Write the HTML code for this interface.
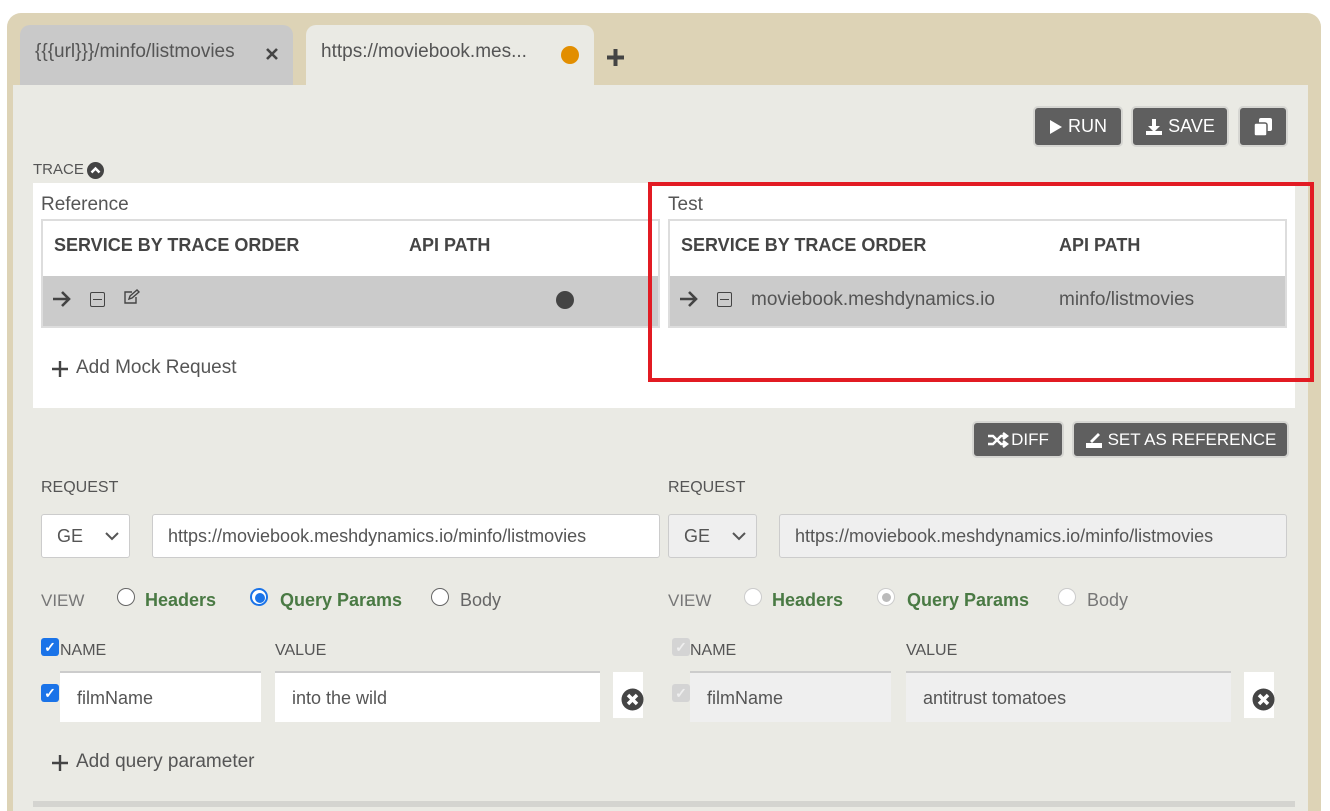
<!DOCTYPE html>
<html><head><style>
*{box-sizing:border-box;margin:0;padding:0}
html,body{width:1330px;height:811px;overflow:hidden}
body{background:#fff;font-family:"Liberation Sans",sans-serif;color:#555;position:relative}
.a{position:absolute}
.btn{position:absolute;background:#5f5f5f;border:2px solid #d6d6d2;border-radius:5px;color:#fff;font-size:18px;display:flex;align-items:center;justify-content:center;gap:5px}
.th{font-weight:bold;font-size:18px;color:#444}
.lbl{font-size:16px;color:#555}
.inp{position:absolute;background:#fff;border:1px solid #ccc;border-radius:3px;font-size:18px;color:#555;padding-left:15px;display:flex;align-items:center}
.radio{position:absolute;width:18px;height:18px;border-radius:50%;border:1px solid #666;background:#fff}
.g{color:#4a7a44;font-weight:bold;font-size:18px}
.cb{position:absolute;width:18px;height:18px;border-radius:3px;background:#1a73e8;color:#fff;font-size:14px;line-height:18px;text-align:center;font-weight:bold}
.cbd{background:#d4d4d4;color:#eee}
</style></head><body>
<div class="a" style="left:7px;top:13px;width:1314px;height:820px;background:#ddd3b6;border-radius:14px"></div>
<div class="a" style="left:13px;top:85px;width:1295px;height:740px;background:#eaeae4"></div>
<div class="a" style="left:20px;top:25px;width:273px;height:60px;background:#c9c9c9;border-radius:10px 10px 0 0"></div>
<div class="a" style="left:35px;top:41px;font-size:19px;color:#555">{{{url}}}/minfo/listmovies</div>
<svg class="a" style="left:266px;top:48px" width="12" height="12"><path d="M1 1L11 11M11 1L1 11" stroke="#444" stroke-width="2.6"/></svg>
<div class="a" style="left:306px;top:25px;width:288px;height:62px;background:#eaeae4;border-radius:10px 10px 0 0"></div>
<div class="a" style="left:321px;top:41px;font-size:19px;color:#555">https://moviebook.mes...</div>
<div class="a" style="left:561px;top:46px;width:18px;height:18px;border-radius:50%;background:#e28e00"></div>
<svg class="a" style="left:606px;top:48px" width="19" height="19"><path d="M9.5 1v17M1 9.5h17" stroke="#444" stroke-width="4"/></svg>

<div class="btn" style="left:1033px;top:106px;width:90px;height:41px"><svg width="14" height="16"><path d="M1 1L13 8L1 15Z" fill="#fff"/></svg>RUN</div>
<div class="btn" style="left:1131px;top:106px;width:98px;height:41px"><svg width="18" height="18"><path d="M7 1h4v7h4l-6 6-6-6h4z M1 13h16v4H1z" fill="#fff"/></svg>SAVE</div>
<div class="btn" style="left:1238px;top:106px;width:50px;height:41px"><svg width="20" height="20"><rect x="6" y="1" width="13" height="13" rx="2" fill="#fff"/><rect x="1" y="6" width="13" height="13" rx="2" fill="#fff" stroke="#5f5f5f" stroke-width="1.5"/></svg></div>

<div class="a" style="left:33px;top:161px;font-size:15px;color:#555">TRACE</div>
<div class="a" style="left:87px;top:162px;width:17px;height:17px;border-radius:50%;background:#444"><svg width="17" height="17"><path d="M4.5 10.5L8.5 6.5L12.5 10.5" stroke="#fff" stroke-width="2.5" fill="none"/></svg></div>

<div class="a" style="left:33px;top:183px;width:1262px;height:225px;background:#fff"></div>
<div class="a" style="left:41px;top:194px;font-size:19px;color:#555">Reference</div>
<div class="a" style="left:668px;top:194px;font-size:19px;color:#555">Test</div>
<div class="a" style="left:41px;top:219px;width:619px;height:109px;border:2px solid #ddd;background:#fff"></div>
<div class="a" style="left:43px;top:276px;width:615px;height:50px;background:#cbcbcb"></div>
<div class="a th" style="left:54px;top:235px">SERVICE BY TRACE ORDER</div>
<div class="a th" style="left:409px;top:235px">API PATH</div>
<svg class="a" style="left:52px;top:290px" width="20" height="18"><path d="M1 9h16M10 2l7 7-7 7" stroke="#444" stroke-width="2.6" fill="none"/></svg>
<div class="a" style="left:90px;top:292px;width:15px;height:15px;border:1.5px solid #444;border-radius:2px"><div style="margin:5.5px 2px;height:1.5px;background:#444"></div></div>
<svg class="a" style="left:123px;top:289px" width="18" height="16"><path d="M9 3H2v11h11V8 M6 10l1-3 7-6 2 2-7 6z" stroke="#444" stroke-width="1.4" fill="none"/></svg>
<div class="a" style="left:556px;top:291px;width:18px;height:18px;border-radius:50%;background:#444"></div>

<div class="a" style="left:668px;top:219px;width:619px;height:109px;border:2px solid #ddd;background:#fff"></div>
<div class="a" style="left:670px;top:276px;width:615px;height:50px;background:#cbcbcb"></div>
<div class="a th" style="left:681px;top:235px">SERVICE BY TRACE ORDER</div>
<div class="a th" style="left:1059px;top:235px">API PATH</div>
<svg class="a" style="left:679px;top:290px" width="20" height="18"><path d="M1 9h16M10 2l7 7-7 7" stroke="#444" stroke-width="2.6" fill="none"/></svg>
<div class="a" style="left:717px;top:292px;width:15px;height:15px;border:1.5px solid #444;border-radius:2px"><div style="margin:5.5px 2px;height:1.5px;background:#444"></div></div>
<div class="a" style="left:751px;top:289px;font-size:19px;color:#555">moviebook.meshdynamics.io</div>
<div class="a" style="left:1059px;top:289px;font-size:19px;color:#555">minfo/listmovies</div>
<svg class="a" style="left:52px;top:361px" width="16" height="16"><path d="M8 0v16M0 8h16" stroke="#444" stroke-width="2.4"/></svg>
<div class="a" style="left:76px;top:357px;font-size:19px;color:#555">Add Mock Request</div>

<div class="a" style="left:648px;top:182px;width:666px;height:200px;border:4px solid #e21b23"></div>

<div class="btn" style="left:972px;top:421px;width:92px;height:37px;font-size:17px;gap:2px"><svg width="22" height="16"><path d="M1 4h5l8 8h5M1 12h5l8-8h5M16 1l4 3-4 3M16 9l4 3-4 3" stroke="#fff" stroke-width="2.4" fill="none"/></svg>DIFF</div>
<div class="btn" style="left:1072px;top:421px;width:217px;height:37px;font-size:17px"><svg width="18" height="17"><path d="M1 12h16v5H1z M5 10l8-8 2 2-8 8z" fill="#fff"/></svg>SET AS REFERENCE</div>

<div class="a lbl" style="left:41px;top:479px">REQUEST</div>
<div class="a lbl" style="left:668px;top:479px">REQUEST</div>
<div class="inp" style="left:41px;top:514px;width:89px;height:44px">GE<svg style="position:absolute;right:10px" width="14" height="9"><path d="M1 1l6 6 6-6" stroke="#555" stroke-width="2" fill="none"/></svg></div>
<div class="inp" style="left:152px;top:514px;width:508px;height:44px">https://moviebook.meshdynamics.io/minfo/listmovies</div>
<div class="inp" style="left:668px;top:514px;width:89px;height:44px;background:#efefef">GE<svg style="position:absolute;right:10px" width="14" height="9"><path d="M1 1l6 6 6-6" stroke="#555" stroke-width="2" fill="none"/></svg></div>
<div class="inp" style="left:779px;top:514px;width:508px;height:44px;background:#efefef">https://moviebook.meshdynamics.io/minfo/listmovies</div>

<div class="a lbl" style="left:41px;top:591px;font-size:17px;color:#777">VIEW</div>
<div class="radio" style="left:117px;top:588px"></div><div class="a g" style="left:145px;top:590px">Headers</div>
<div class="radio" style="left:250px;top:588px;border:2px solid #1a73e8"><div style="margin:3px;width:10px;height:10px;border-radius:50%;background:#1a73e8"></div></div><div class="a g" style="left:280px;top:590px">Query Params</div>
<div class="radio" style="left:431px;top:588px"></div><div class="a" style="left:460px;top:590px;font-size:18px;color:#666">Body</div>

<div class="a lbl" style="left:668px;top:591px;font-size:17px;color:#777">VIEW</div>
<div class="radio" style="left:744px;top:588px;border-color:#ccc"></div><div class="a g" style="left:772px;top:590px">Headers</div>
<div class="radio" style="left:877px;top:588px;border-color:#ccc"><div style="margin:4px;width:9px;height:9px;border-radius:50%;background:#bbb"></div></div><div class="a g" style="left:907px;top:590px">Query Params</div>
<div class="radio" style="left:1058px;top:588px;border-color:#ccc"></div><div class="a" style="left:1087px;top:590px;font-size:18px;color:#777">Body</div>

<div class="cb" style="left:41px;top:638px">✓</div><div class="a lbl" style="left:60px;top:642px">NAME</div>
<div class="a lbl" style="left:275px;top:642px">VALUE</div>
<div class="cb" style="left:41px;top:684px">✓</div>
<div class="a" style="left:60px;top:671px;width:201px;height:51px;background:#fff;border-top:2px solid #ccc;font-size:18px;padding:15px 0 0 17px">filmName</div>
<div class="a" style="left:275px;top:671px;width:325px;height:51px;background:#fff;border-top:2px solid #ccc;font-size:18px;padding:15px 0 0 17px">into the wild</div>
<div class="a" style="left:613px;top:672px;width:30px;height:46px;background:#fff"></div>
<svg class="a" style="left:621px;top:688px" width="23" height="23"><circle cx="11.5" cy="11.5" r="11" fill="#444"/><path d="M7 7l9 9M16 7l-9 9" stroke="#fff" stroke-width="3.5"/></svg>

<div class="cb cbd" style="left:672px;top:638px">✓</div><div class="a lbl" style="left:690px;top:642px">NAME</div>
<div class="a lbl" style="left:906px;top:642px">VALUE</div>
<div class="cb cbd" style="left:672px;top:684px">✓</div>
<div class="a" style="left:690px;top:671px;width:201px;height:51px;background:#efefef;border-top:2px solid #ccc;font-size:18px;padding:15px 0 0 17px">filmName</div>
<div class="a" style="left:906px;top:671px;width:325px;height:51px;background:#efefef;border-top:2px solid #ccc;font-size:18px;padding:15px 0 0 17px">antitrust tomatoes</div>
<div class="a" style="left:1244px;top:672px;width:30px;height:46px;background:#fff"></div>
<svg class="a" style="left:1252px;top:688px" width="23" height="23"><circle cx="11.5" cy="11.5" r="11" fill="#444"/><path d="M7 7l9 9M16 7l-9 9" stroke="#fff" stroke-width="3.5"/></svg>

<svg class="a" style="left:52px;top:755px" width="16" height="16"><path d="M8 0v16M0 8h16" stroke="#444" stroke-width="2.4"/></svg>
<div class="a" style="left:76px;top:751px;font-size:19px;color:#555">Add query parameter</div>
<div class="a" style="left:33px;top:801px;width:1262px;height:6px;background:#d4d4d0"></div>
</body></html>
